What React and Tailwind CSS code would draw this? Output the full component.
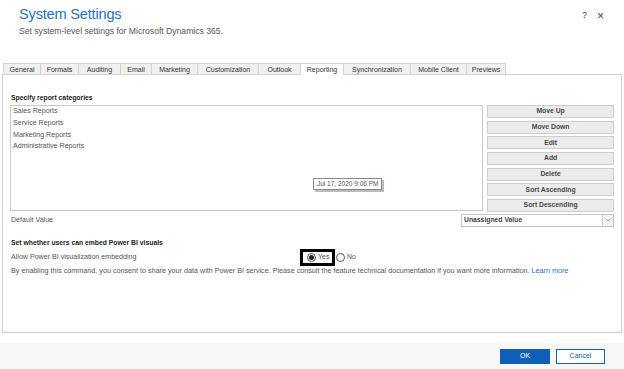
const tabs = [
    { label: "General", w: "w-[37px]" },
    { label: "Formats", w: "w-[38px]" },
    { label: "Auditing", w: "w-[42px]" },
    { label: "Email", w: "w-[31px]" },
    { label: "Marketing", w: "w-[46px]" },
    { label: "Customization", w: "w-[61px]" },
    { label: "Outlook", w: "w-[42px]" },
    { label: "Reporting", w: "w-[43px]", active: true },
    { label: "Synchronization", w: "w-[67px]" },
    { label: "Mobile Client", w: "w-[56px]" },
    { label: "Previews", w: "w-[40px]" },
];

const categories = ["Sales Reports", "Service Reports", "Marketing Reports", "Administrative Reports"];

const actions = ["Move Up", "Move Down", "Edit", "Add", "Delete", "Sort Ascending", "Sort Descending"];

function Radio({ checked, label }) {
    return (
        <div className="flex items-center gap-[2px]">
            <span className="w-[9px] h-[9px] rounded-full border border-[#555] bg-white flex items-center justify-center">
                {checked && <span className="w-[5px] h-[5px] rounded-full bg-[#222]" />}
            </span>
            <span className="text-[7px] text-[#555]">{label}</span>
        </div>
    );
}

export default function App() {
    return (
        <div
            className="w-[624px] h-[369px] bg-white flex flex-col overflow-hidden text-[#333]"
            style={{ fontFamily: '"Liberation Sans", Arial, sans-serif' }}
        >
            {/* Header */}
            <div className="h-[63px] relative pl-[19px] pt-[5px]">
                <h1 className="text-[14.6px] leading-[18px] text-[#2b70c2] tracking-[-0.2px]">System Settings</h1>
                <p className="text-[8.6px] leading-[10px] mt-[3px] text-[#555]">
                    Set system-level settings for Microsoft Dynamics 365.
                </p>
                <div className="absolute right-[20px] top-[9px] flex items-center gap-[10px] text-[#444]">
                    <span className="text-[9px]">?</span>
                    <span className="text-[12px] leading-[12px]">×</span>
                </div>
            </div>

            {/* Tabs */}
            <div className="flex h-[12px] pl-[3px] relative z-10">
                {tabs.map((t) => (
                    <div
                        key={t.label}
                        className={`${t.w} h-[12px] border border-r-0 last:border-r border-[#d2d2d2] flex items-center justify-center text-[7px] leading-none ${
                            t.active ? "bg-white border-b-white" : "bg-[#f0f0f0] border-b-[#d2d2d2]"
                        }`}
                    >
                        {t.label}
                    </div>
                ))}
            </div>

            {/* Panel */}
            <div className="ml-[2px] w-[620px] h-[259px] -mt-px border border-[#d0d0d0] px-[7px] pt-[18px]">
                <h2 className="text-[6.8px] leading-[9px] font-bold text-[#222] pl-px">Specify report categories</h2>
                <div className="flex gap-[4px] mt-[3px] h-[107px]">
                    <div className="relative w-[474px] h-[106px] border border-[#c9c9c9] pl-[2px] text-[7.1px] text-[#555]">
                        {categories.map((c) => (
                            <div key={c} className="leading-[11.8px]">{c}</div>
                        ))}
                        <div className="absolute left-[302px] top-[72px] border border-[#888] bg-white px-[3px] h-[12px] flex items-center text-[6.5px] text-[#555] shadow-[2px_2px_0_#bbb]">
                            Jul 17, 2020 9:06 PM
                        </div>
                    </div>
                    <div className="w-[127px] h-[107px] flex flex-col justify-between">
                        {actions.map((a) => (
                            <div
                                key={a}
                                className="h-[13px] bg-[#ebebeb] border border-[#cdcdcd] flex items-center justify-center text-[6.8px] font-bold text-[#484848]"
                            >
                                {a}
                            </div>
                        ))}
                    </div>
                </div>

                <div className="flex items-center justify-between mt-[1px] h-[14px]">
                    <span className="text-[7.1px] text-[#555] pl-px">Default Value</span>
                    <div className="w-[153px] h-[13px] border border-[#c4c4c4] flex items-center justify-between pl-[2px]">
                        <span className="text-[6.8px] text-[#444] font-bold">Unassigned Value</span>
                        <span className="w-[11px] h-[11px] border-l border-[#d0d0d0] bg-[#f4f4f4] flex items-center justify-center">
                            <svg width="6" height="4" viewBox="0 0 6 4" fill="none">
                                <path d="M0.5 0.5 L3 3 L5.5 0.5" stroke="#888" strokeWidth="0.8" />
                            </svg>
                        </span>
                    </div>
                </div>

                <h2 className="text-[6.8px] leading-[9px] font-bold text-[#222] mt-[10.5px] pl-px">
                    Set whether users can embed Power BI visuals
                </h2>
                <div className="flex items-center mt-[2.5px] h-[17px]">
                    <span className="w-[290px] text-[7.1px] text-[#555] pl-px">Allow Power BI visualization embedding</span>
                    <div className="w-[35px] h-[17px] border-[3px] border-black flex items-center pl-[4px]">
                        <Radio checked label="Yes" />
                    </div>
                    <div className="ml-px">
                        <Radio label="No" />
                    </div>
                </div>
                <p className="text-[7.2px] leading-[9px] text-[#555] pl-px">
                    By enabling this command, you consent to share your data with Power BI service. Please consult the feature
                    technical documentation if you want more information.{" "}
                    <a className="text-[#1f6fc5]">Learn more</a>
                </p>
            </div>

            {/* Footer */}
            <div className="mt-[10px] flex-1 bg-[#f7f7f7] flex items-start justify-end gap-[6px] pr-[19px] pt-[6px]">
                <button className="w-[50px] h-[15px] bg-[#1160b7] text-white text-[7px]">OK</button>
                <button className="w-[49px] h-[15px] bg-white border border-[#1160b7] text-[#1160b7] text-[7px]">Cancel</button>
            </div>
        </div>
    );
}
